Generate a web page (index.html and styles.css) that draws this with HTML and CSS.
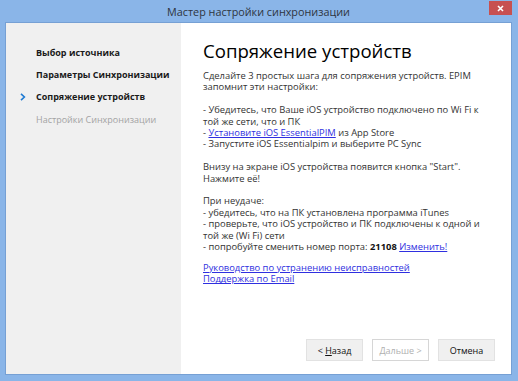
FILE: index.html
```html
<!DOCTYPE html>
<html lang="ru">
<head>
<meta charset="utf-8">
<title>Мастер настройки синхронизации</title>
<link rel="stylesheet" href="styles.css">
</head>
<body>
<div class="window">
  <div class="titlebar">
    <span class="title">Мастер настройки синхронизации</span>
    <span class="close"><svg width="7" height="7" viewBox="0 0 7 7"><path d="M1 1L6 6M6 1L1 6" stroke="#fff" stroke-width="1.6"/></svg></span>
  </div>
  <div class="client">
    <nav class="steps">
      <div class="step done"><span class="marker"></span>Выбор источника</div>
      <div class="step done"><span class="marker"></span>Параметры Синхронизации</div>
      <div class="step current"><span class="marker"><svg width="6" height="8" viewBox="0 0 6 8"><path d="M1 0.8L4.4 4L1 7.2" fill="none" stroke="#1f7bd3" stroke-width="1.6"/></svg></span>Сопряжение устройств</div>
      <div class="step todo"><span class="marker"></span>Настройки Синхронизации</div>
    </nav>
    <main class="page">
      <h1 class="heading">Сопряжение устройств</h1>
      <div class="text">
        <p>Сделайте 3 простых шага для сопряжения устройств. EPIM<br>запомнит эти настройки:</p>
        <p>- Убедитесь, что Ваше iOS устройство подключено по Wi Fi к<br>той же сети, что и ПК<br>- <a href="#">Установите iOS EssentialPIM</a> из App Store<br>- Запустите iOS Essentialpim и выберите PC Sync</p>
        <p>Внизу на экране iOS устройства появится кнопка "Start".<br>Нажмите её!</p>
        <p class="tight">При неудаче:<br>- убедитесь, что на ПК установлена программа iTunes<br>- проверьте, что iOS устройство и ПК подключены к одной и<br>той же (Wi Fi) сети<br>- попробуйте сменить номер порта: <b>21108</b> <a href="#">Изменить!</a></p>
        <p><a href="#">Руководство по устранению неисправностей</a><br><a href="#">Поддержка по Email</a></p>
      </div>
      <div class="buttons">
        <button class="btn">&lt; <u>Н</u>азад</button>
        <button class="btn disabled" disabled>Дальше &gt;</button>
        <button class="btn">Отмена</button>
      </div>
    </main>
  </div>
</div>
</body>
</html>
```

FILE: styles.css
```css
html, body {
  margin: 0;
  padding: 0;
}
body {
  width: 518px;
  height: 381px;
  overflow: hidden;
  font-family: "Open Sans", "Noto Sans", sans-serif;
}
.window {
  box-sizing: border-box;
  width: 518px;
  height: 381px;
  background: #8ab5e8;
  padding: 0 6px 6px 5px;
  display: flex;
  flex-direction: column;
}
.titlebar {
  height: 22px;
  display: grid;
  grid-template-columns: 1fr auto 1fr;
  align-items: start;
}
.title {
  grid-column: 2;
  font-size: 10.8px;
  line-height: 24px;
  color: #2e3440;
}
.close {
  grid-column: 3;
  justify-self: end;
  width: 23px;
  height: 14px;
  margin-top: 1px;
  background: #c75050;
  display: flex;
  align-items: center;
  justify-content: center;
}
.close svg { display: block; }
.client {
  flex: 1;
  display: flex;
  border: 1px solid #76a0d4;
  background: #fff;
  min-height: 0;
}
.steps {
  width: 175px;
  background: #f0f0f0;
  padding-top: 18px;
  box-sizing: border-box;
}
.step {
  display: flex;
  align-items: center;
  height: 22.3px;
  font-size: 9px;
  font-weight: 700;
  color: #1a1a1a;
  white-space: nowrap;
}
.marker {
  width: 30px;
  box-sizing: border-box;
  padding-left: 14px;
  display: flex;
  align-items: center;
}
.marker svg { display: block; }
.step.todo {
  font-weight: 400;
  color: #a3a3a3;
}
.page {
  flex: 1;
  display: flex;
  flex-direction: column;
  padding: 15px 16px 13px 22px;
  min-width: 0;
}
.heading {
  margin: 0;
  font-size: 18.6px;
  font-weight: 400;
  line-height: 25px;
  color: #000;
  white-space: nowrap;
}
.text {
  margin-top: 7px;
  font-size: 9.4px;
  line-height: 11.4px;
  color: #333;
  white-space: nowrap;
}
.text p {
  margin: 0 0 11.4px 0;
}
.text p.tight {
  margin-bottom: 9.6px;
}
.text b {
  color: #111;
}
.text a {
  color: #2f2fe0;
  text-decoration: underline;
}
.buttons {
  margin-top: auto;
  display: flex;
  justify-content: flex-end;
  gap: 9px;
}
.btn {
  width: 57px;
  height: 22px;
  padding: 0;
  box-sizing: border-box;
  background: #f0f0f0;
  border: 1px solid #e2e2e2;
  font-family: "Open Sans", "Noto Sans", sans-serif;
  font-size: 9px;
  color: #111;
}
.btn.disabled {
  background: #fff;
  border-color: #d6d6d6;
  color: #b0b0b0;
}
```
